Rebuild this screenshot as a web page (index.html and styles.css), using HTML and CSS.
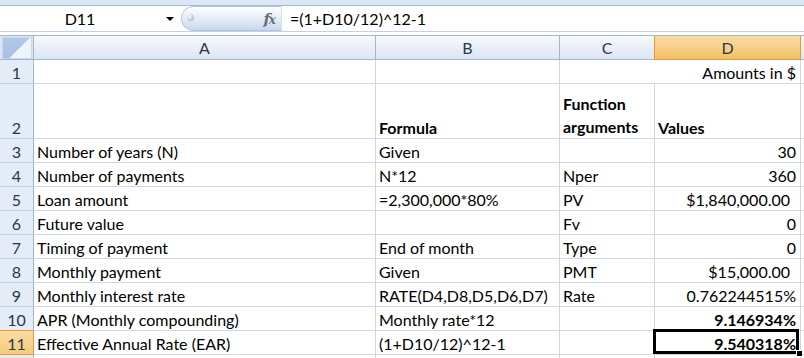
FILE: index.html
```html
<!DOCTYPE html>
<html>
<head>
<meta charset="UTF-8">
<title>Effective Annual Rate</title>
<link rel="stylesheet" href="styles.css">
</head>
<body>
	<div id="container">
		<div class="ribbon-edge"></div>

		<!-- 이름 상자 + 수식 입력줄 -->
		<div class="formula-bar">
			<div class="name-box">
				<span class="cell-ref">D11</span>
				<span class="drop-arrow"></span>
			</div>
			<div class="fx-box">
				<span class="knob"></span>
				<span class="fx">f<span class="fx-x">x</span></span>
			</div>
			<div class="formula">=(1+D10/12)^12-1</div>
		</div>
		<div class="bar-gap"></div>

		<div class="sheet">
			<!-- 열 머리글 -->
			<div class="corner"><span class="corner-tri"></span></div>
			<div class="colhead">A</div>
			<div class="colhead">B</div>
			<div class="colhead">C</div>
			<div class="colhead active">D</div>
			<div class="colhead edge"></div>

			<!-- 1 -->
			<div class="rowhead">1</div>
			<div class="cell"></div>
			<div class="cell"></div>
			<div class="cell merged num">Amounts in $</div>
			<div class="cell edge"></div>

			<!-- 2 -->
			<div class="rowhead">2</div>
			<div class="cell"></div>
			<div class="cell bold">Formula</div>
			<div class="cell bold wrap">Function arguments</div>
			<div class="cell bold">Values</div>
			<div class="cell edge"></div>

			<!-- 3 -->
			<div class="rowhead">3</div>
			<div class="cell">Number of years (N)</div>
			<div class="cell">Given</div>
			<div class="cell"></div>
			<div class="cell num">30</div>
			<div class="cell edge"></div>

			<!-- 4 -->
			<div class="rowhead">4</div>
			<div class="cell">Number of payments</div>
			<div class="cell">N*12</div>
			<div class="cell">Nper</div>
			<div class="cell num">360</div>
			<div class="cell edge"></div>

			<!-- 5 -->
			<div class="rowhead">5</div>
			<div class="cell">Loan amount</div>
			<div class="cell">=2,300,000*80%</div>
			<div class="cell">PV</div>
			<div class="cell num money">$1,840,000.00</div>
			<div class="cell edge"></div>

			<!-- 6 -->
			<div class="rowhead">6</div>
			<div class="cell">Future value</div>
			<div class="cell"></div>
			<div class="cell">Fv</div>
			<div class="cell num">0</div>
			<div class="cell edge"></div>

			<!-- 7 -->
			<div class="rowhead">7</div>
			<div class="cell">Timing of payment</div>
			<div class="cell">End of month</div>
			<div class="cell">Type</div>
			<div class="cell num">0</div>
			<div class="cell edge"></div>

			<!-- 8 -->
			<div class="rowhead">8</div>
			<div class="cell">Monthly payment</div>
			<div class="cell">Given</div>
			<div class="cell">PMT</div>
			<div class="cell num money">$15,000.00</div>
			<div class="cell edge"></div>

			<!-- 9 -->
			<div class="rowhead">9</div>
			<div class="cell">Monthly interest rate</div>
			<div class="cell">RATE(D4,D8,D5,D6,D7)</div>
			<div class="cell">Rate</div>
			<div class="cell num">0.762244515%</div>
			<div class="cell edge"></div>

			<!-- 10 -->
			<div class="rowhead">10</div>
			<div class="cell">APR (Monthly compounding)</div>
			<div class="cell">Monthly rate*12</div>
			<div class="cell"></div>
			<div class="cell num bold">9.146934%</div>
			<div class="cell edge"></div>

			<!-- 11 : 선택된 행 -->
			<div class="rowhead active">11</div>
			<div class="cell">Effective Annual Rate (EAR)</div>
			<div class="cell">(1+D10/12)^12-1</div>
			<div class="cell"></div>
			<div class="cell num bold selected">9.540318%</div>
			<div class="cell edge"></div>

			<!-- 12 (잘림) -->
			<div class="rowhead"></div>
			<div class="cell"></div>
			<div class="cell"></div>
			<div class="cell"></div>
			<div class="cell"></div>
			<div class="cell edge"></div>
		</div>
	</div>
</body>
</html>
```

FILE: styles.css
```css
body {
	margin: 0;
	padding: 0;
	font-family: "Lato", "Liberation Sans", sans-serif;
	font-size: 16px;
	color: #000;
	overflow: hidden;
}

#container {
	width: 804px;
	height: 358px;
	overflow: hidden;
	background-color: #fff;
}

.ribbon-edge {
	height: 5px;
	background-color: #dce7f5;
	border-bottom: 1px solid #a3bbdb;
}

/* 수식 입력줄 */
.formula-bar {
	display: flex;
	height: 25px;
	border-bottom: 1px solid #c3d0e2;
	background-color: #fff;
}

.name-box {
	width: 181px;
	display: flex;
	align-items: center;
}

.cell-ref {
	width: 160px;
	text-align: center;
	line-height: 25px;
}

.drop-arrow {
	width: 0;
	height: 0;
	margin-left: 6px;
	border-left: 4px solid transparent;
	border-right: 4px solid transparent;
	border-top: 4px solid #000;
}

.fx-box {
	width: 100px;
	height: 25px;
	box-sizing: border-box;
	border: 1px solid #b2c5de;
	border-right: none;
	border-radius: 13px 0 0 13px;
	background: linear-gradient(#ffffff, #e7eef8 45%, #c9d8ec);
	display: flex;
	align-items: center;
	justify-content: space-between;
	padding: 0 6px 0 5px;
}

.knob {
	width: 7px;
	height: 7px;
	border-radius: 50%;
	background: radial-gradient(circle at 35% 35%, #ffffff, #9aa3ad);
	margin-bottom: 2px;
}

.fx {
	font-family: "DejaVu Serif", serif;
	font-style: italic;
	font-weight: bold;
	font-size: 15px;
	color: #6b6f75;
	letter-spacing: -1px;
}

.fx-x {
	font-size: 12px;
}

.formula {
	flex: 1;
	border-left: 1px solid #d6dfeb;
	padding-left: 8px;
	line-height: 25px;
}

.bar-gap {
	height: 3px;
	background-color: #fff;
}

/* 워크시트 */
.sheet {
	display: grid;
	grid-template-columns: 34px 342px 184px 95px 146px 1fr;
	grid-template-rows: 24px 24px 55px repeat(9, 24px) 1fr;
	height: 323px;
	border-top: 1px solid #9eb6ce;
}

.sheet > div {
	box-sizing: border-box;
}

.corner {
	background-color: #dbe5f3;
	border-right: 1px solid #9eb6ce;
	border-bottom: 1px solid #9eb6ce;
	padding: 1px 1px 0 2px;
}

.corner-tri {
	display: block;
	width: 100%;
	height: 100%;
	background:
		linear-gradient(135deg, transparent 55%, #eef3fa 55%) no-repeat,
		linear-gradient(#b3c9e8, #a6bfe3);
	border: 1px solid #c9d8ee;
	box-sizing: border-box;
}

.colhead {
	background: linear-gradient(#f8fafd, #e9eff7 50%, #dce5f1);
	border-right: 1px solid #9eb6ce;
	border-bottom: 1px solid #9eb6ce;
	text-align: center;
	line-height: 23px;
	color: #27384a;
}

.colhead.active {
	background: linear-gradient(#f9dca5, #f7d089 50%, #f1c15f);
	border-right-color: #f29536;
	border-bottom-color: #f29536;
	box-shadow: -1px 0 0 #f29536;
}

.rowhead {
	background-color: #e4ecf7;
	border-right: 1px solid #9eb6ce;
	border-bottom: 1px solid #c5d3e6;
	color: #27384a;
	display: flex;
	align-items: flex-end;
	justify-content: center;
	line-height: 20px;
}

.rowhead.active {
	background: linear-gradient(#fadca3, #f5cb7c);
	border-right-color: #f29536;
	border-bottom-color: #f29536;
	box-shadow: 0 -1px 0 #f29536;
}

.cell {
	border-right: 1px solid #d0d7e5;
	border-bottom: 1px solid #d0d7e5;
	display: flex;
	align-items: flex-end;
	padding: 0 3px 0 3px;
	line-height: 20px;
	white-space: nowrap;
}

.cell.merged {
	grid-column: span 2;
}

.cell.num {
	justify-content: flex-end;
	padding-right: 4px;
}

.cell.money {
	padding-right: 10px;
}

.cell.bold {
	font-weight: bold;
}

.cell.wrap {
	white-space: normal;
	line-height: 23px;
}

.cell.edge,
.colhead.edge {
	border-right: none;
}

/* 선택된 셀 테두리 */
.cell.selected {
	position: relative;
}

.cell.selected::after {
	content: "";
	position: absolute;
	left: -2px;
	top: -2px;
	right: 1px;
	bottom: 0;
	border: 3px solid #000;
}

.cell.selected::before {
	content: "";
	position: absolute;
	right: -3px;
	bottom: -3px;
	width: 5px;
	height: 5px;
	background-color: #000;
	border: 1px solid #fff;
	z-index: 1;
}
```
